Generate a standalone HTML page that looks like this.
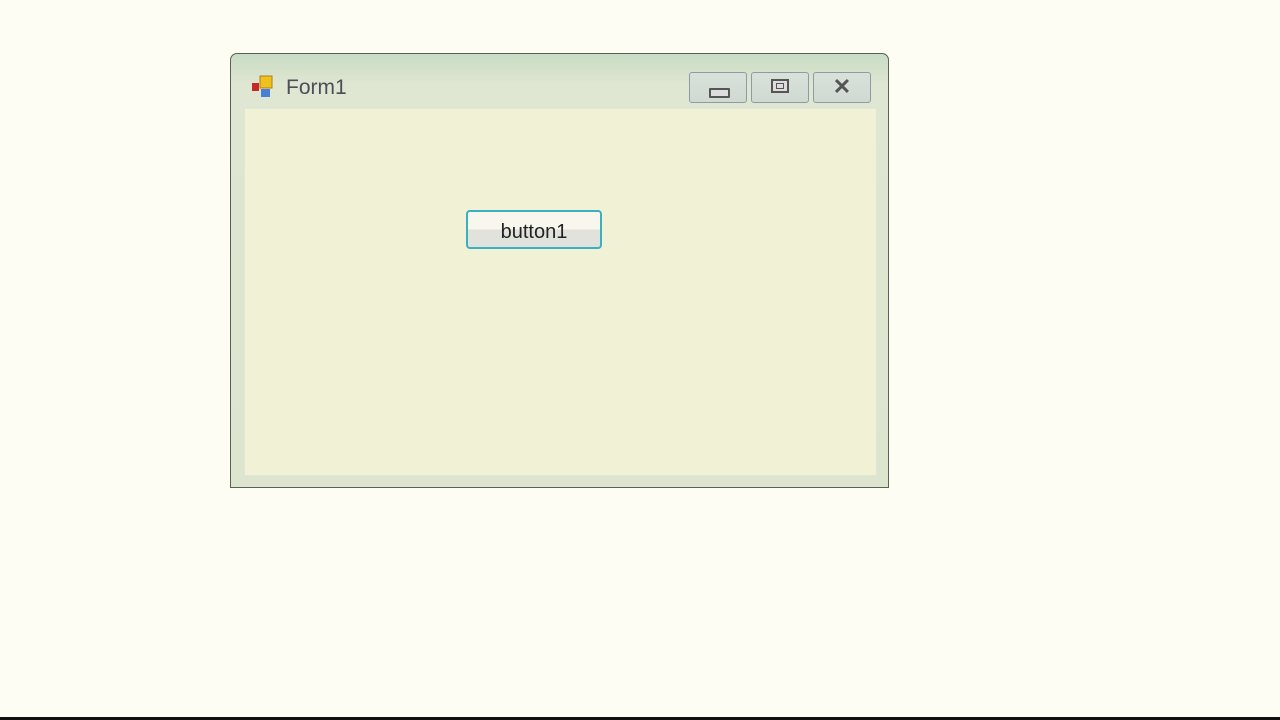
<!DOCTYPE html>
<html><head><style>
body{margin:0;width:1280px;height:720px;background:#fdfdf4;position:relative;overflow:hidden;font-family:"Liberation Sans",sans-serif}
.win{position:absolute;left:230px;top:53px;width:657px;height:433px;border:1px solid #5a5f58;border-radius:7px 7px 0 0;background:linear-gradient(#c8dcc4,#dfe6d2 30px,#dde5cf);}
.client{position:absolute;left:13px;top:54px;width:631px;height:366px;background:#f1f1d6;border:1px solid #e0e6d8}
.title{position:absolute;left:55px;top:22px;font-size:21px;color:#4a5058}
.tb{position:absolute;top:18px;width:56px;height:29px;border:1px solid #8f9aa6;border-radius:3px;background:linear-gradient(#d8e2da,#d0dad2)}
.btn{position:absolute;left:466px;top:210px;width:132px;height:35px;border:2px solid #3ab0c0;border-radius:4px;background:linear-gradient(#f7f7ee 50%,#e2e2dc 50%);font-size:20px;text-align:center;line-height:40px;color:#222}
.bot{position:absolute;left:0;top:717px;width:1280px;height:3px;background:#111}
</style></head><body>
<div class="win">
 <svg style="position:absolute;left:20px;top:21px" width="24" height="24"><rect x="1" y="8" width="7" height="8" fill="#c82828"/><rect x="9" y="1" width="12" height="12" fill="#f0c020" stroke="#b08010"/><rect x="10" y="14" width="9" height="8" fill="#4880d8"/></svg>
 <div class="title">Form1</div>
 <div class="tb" style="left:458px"><div style="position:absolute;left:19px;top:15px;width:17px;height:6px;border:2px solid #555;border-radius:1px;background:#ddd"></div></div>
 <div class="tb" style="left:520px"><div style="position:absolute;left:19px;top:6px;width:14px;height:10px;border:2px solid #555;background:#ddd"><div style="margin:2px 3px;width:6px;height:4px;border:1px solid #555"></div></div></div>
 <div class="tb" style="left:582px;text-align:center;font-size:22px;font-weight:bold;color:#555;line-height:28px">✕</div>
 <div class="client"></div>
</div>
<div class="btn">button1</div>
<div class="bot"></div>
</body></html>
